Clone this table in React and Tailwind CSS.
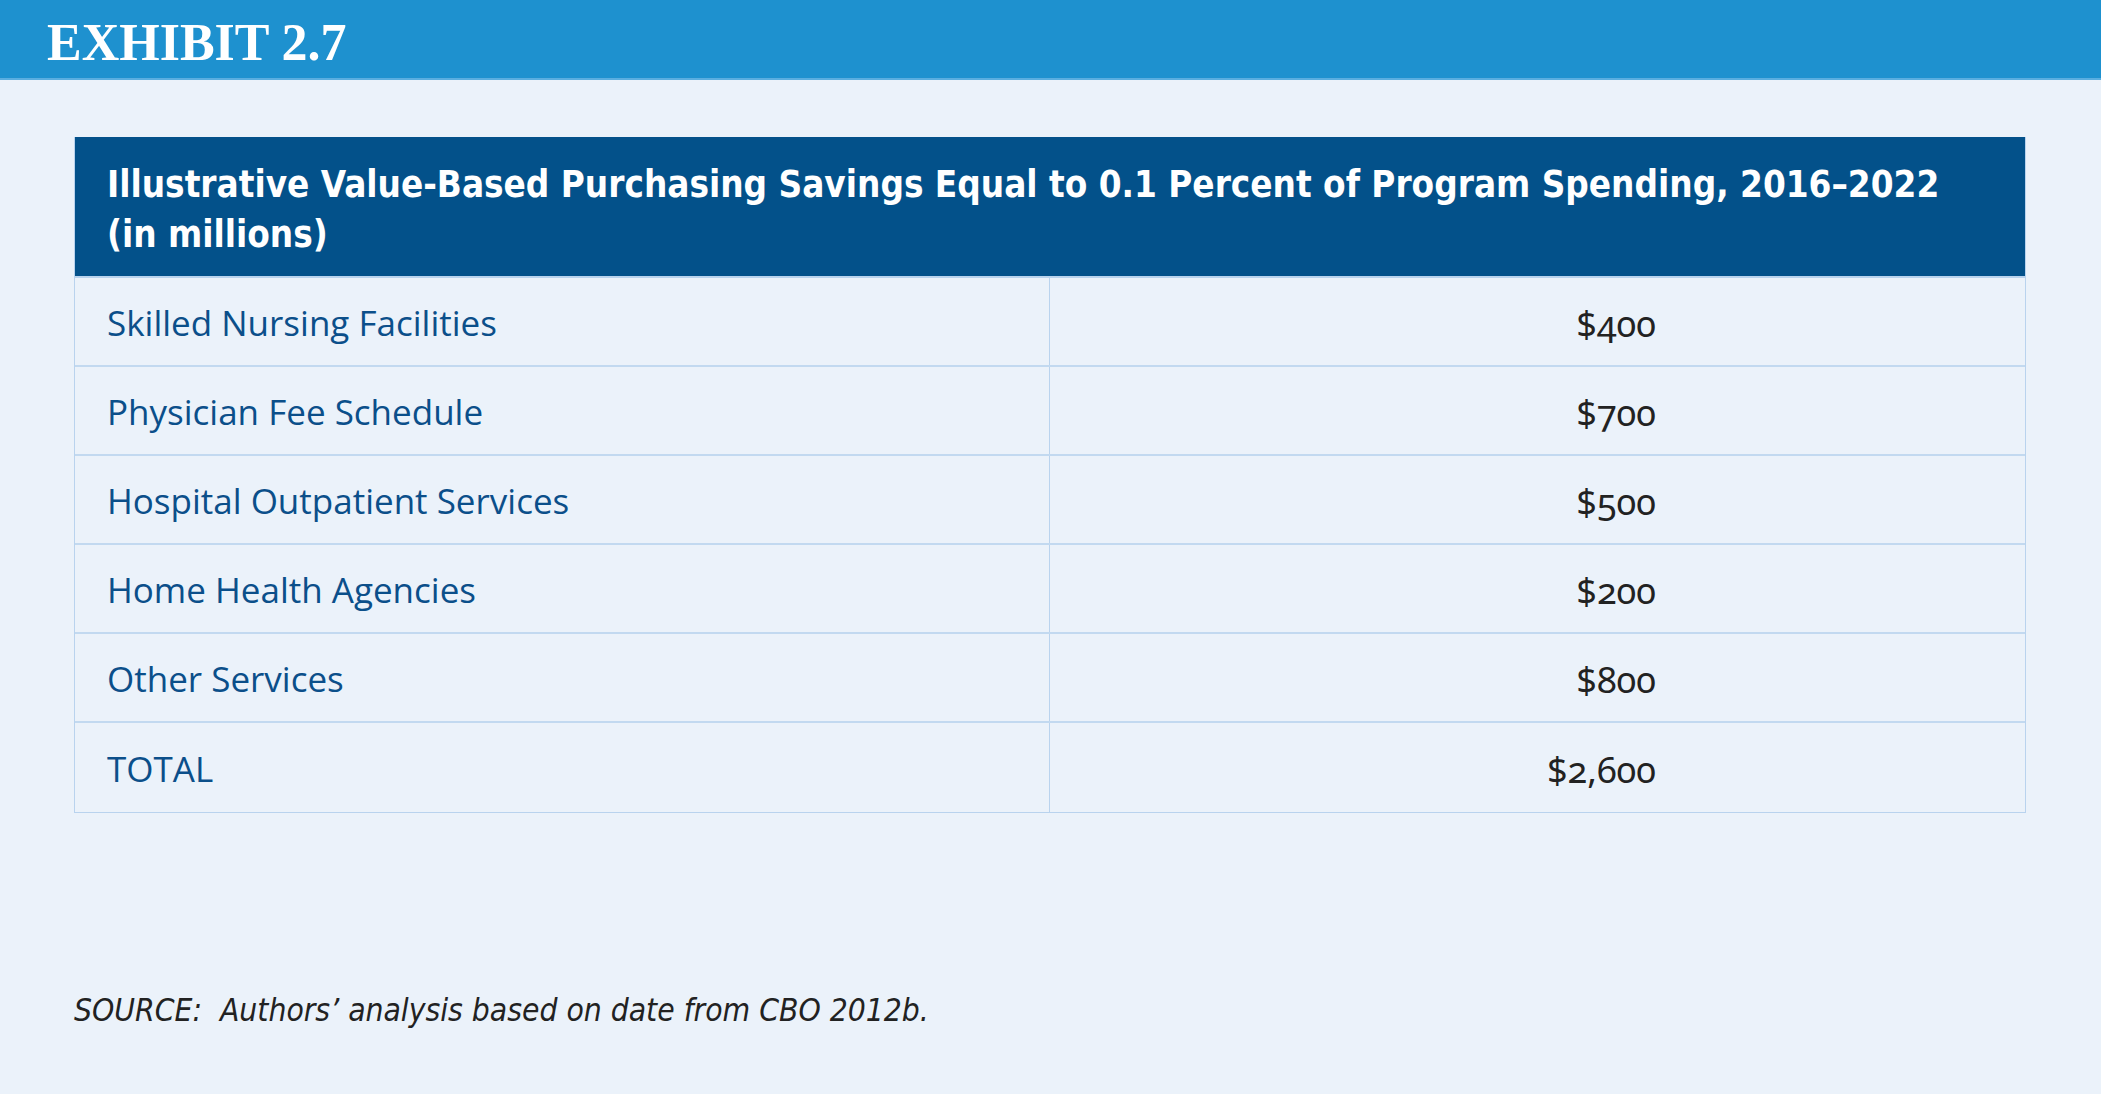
import React from 'react';

const rows = [
    { label: 'Skilled Nursing Facilities', value: '$400' },
    { label: 'Physician Fee Schedule', value: '$700' },
    { label: 'Hospital Outpatient Services', value: '$500' },
    { label: 'Home Health Agencies', value: '$200' },
    { label: 'Other Services', value: '$800' },
    { label: 'TOTAL', value: '$2,600' },
];

const App = () => {
    return (
        <div className="w-[2101px] h-[1094px] bg-[#ebf2fa] flex flex-col">
            {/* Exhibit bar */}
            <div className="h-[80px] shrink-0 bg-[#1e91cf] border-b-2 border-[#5aaee0] flex items-center pl-[47px] pt-[8px]">
                <span className="text-white font-bold text-[52px] leading-none font-['Liberation_Serif',serif]">
                    EXHIBIT 2.7
                </span>
            </div>

            {/* Table */}
            <div className="mt-[57px] mx-[74px] w-[1952px] border border-[#b9d3ee] border-t-0">
                <div className="h-[141px] bg-[#03518a] flex flex-col justify-center pl-[32px] pt-[6px] border-b-2 border-[#b9d3ee]">
                    <h2 className="text-white font-bold text-[36.5px] leading-[50px] font-['DejaVu_Sans_Condensed',sans-serif]">
                        Illustrative Value-Based Purchasing Savings Equal to 0.1 Percent of Program Spending, 2016–2022
                        <br />
                        (in millions)
                    </h2>
                </div>
                {rows.map((row, idx) => (
                    <div
                        key={row.label}
                        className={`grid grid-cols-2 h-[89px] ${idx < rows.length - 1 ? 'border-b-2 border-[#c2d9f0]' : ''}`}
                    >
                        <div className="flex items-center pl-[32px] pt-[4px] border-r border-[#b9d3ee] text-[#0b4f8a] text-[35px] font-['Open_Sans',sans-serif]">
                            {row.label}
                        </div>
                        <div className="flex items-center justify-end pt-[4px] pr-[369px] text-[#222] text-[36px] font-['Noto_Sans',sans-serif] oldstyle-nums">
                            {row.value}
                        </div>
                    </div>
                ))}
            </div>

            {/* Source note */}
            <p className="mt-[174px] ml-[74px] italic text-[#222] text-[31.5px] font-['DejaVu_Sans_Condensed',sans-serif]">
                SOURCE:&nbsp; Authors’ analysis based on date from CBO 2012b.
            </p>
        </div>
    );
};

export default App;
